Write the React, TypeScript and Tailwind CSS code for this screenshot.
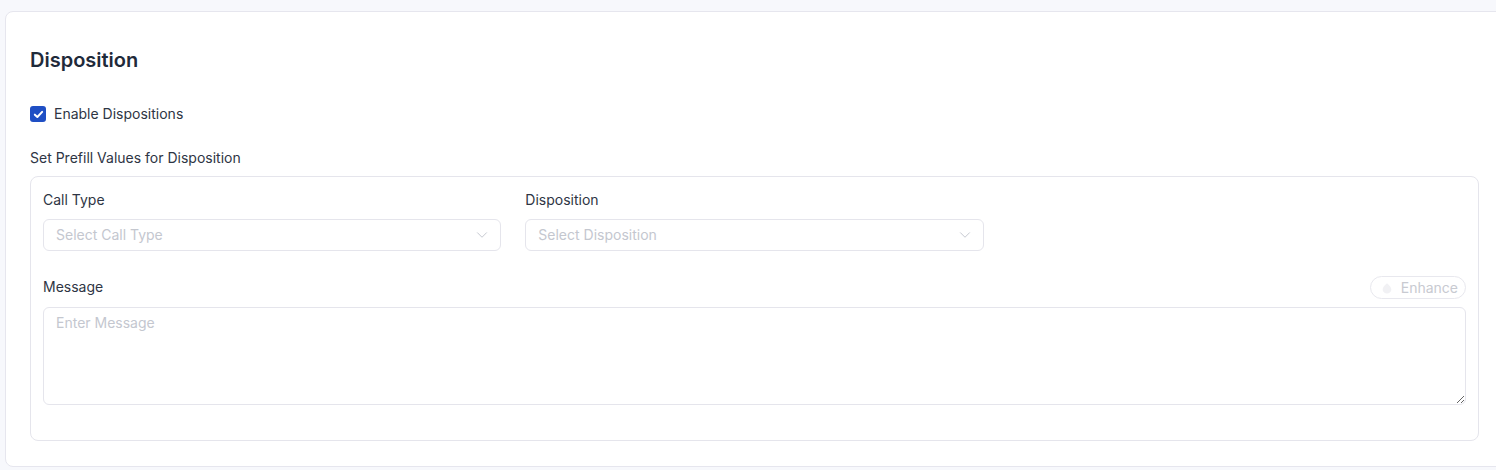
import { ChevronDown } from "lucide-react"

function SelectBox({ placeholder }: { placeholder: string }) {
   return (
      <div className="flex h-8 items-center justify-between rounded-md border border-[#e5e5ec] bg-white pl-3 pr-[9px]">
         <span className="text-sm text-[#c4c7cf]">{placeholder}</span>
         <ChevronDown className="h-[18px] w-[18px] text-[#c4c7cf]" strokeWidth={1.3} />
      </div>
   )
}

export default function App() {
   return (
      <div
         className="h-[470px] w-full overflow-hidden bg-[#f7f8fc] pl-[5px] pt-[11px]"
         style={{ fontFamily: "Inter, 'Noto Sans', sans-serif" }}
      >
         <div className="h-[456px] w-[1510px] rounded-lg border border-[#e6e6ee] bg-white pl-[24px] pr-[31px] pt-[34px]">
            <h2 className="text-xl font-semibold leading-7 text-[#1f2a3a]">Disposition</h2>

            <label className="mt-[30px] flex items-center gap-2">
               <span className="flex h-4 w-4 items-center justify-center rounded-[3px] bg-[#1f4fc4]">
                  <svg viewBox="0 0 16 16" className="h-[13px] w-[13px]" fill="none">
                     <path d="M3.5 8.2 6.6 11 12.5 4.8" stroke="white" strokeWidth="2.5" strokeLinecap="round" strokeLinejoin="round" />
                  </svg>
               </span>
               <span className="text-sm text-[#2e3544]">Enable Dispositions</span>
            </label>

            <p className="mt-[24px] text-sm text-[#2e3544]">Set Prefill Values for Disposition</p>

            <div className="mt-[8px] h-[265px] w-[1449px] rounded-lg border border-[#e5e5ec] px-3 pt-[13px]">
               <div className="grid grid-cols-3 gap-6">
                  <div>
                     <p className="mb-[9px] text-sm leading-5 text-[#2e3544]">Call Type</p>
                     <SelectBox placeholder="Select Call Type" />
                  </div>
                  <div>
                     <p className="mb-[9px] text-sm leading-5 text-[#2e3544]">Disposition</p>
                     <SelectBox placeholder="Select Disposition" />
                  </div>
               </div>

               <div className="mt-[25px] flex items-end justify-between">
                  <p className="pb-[2px] text-sm leading-5 text-[#2e3544]">Message</p>
                  <button className="flex h-[23px] items-center gap-[7px] rounded-full border border-[#e8e8ee] bg-white pl-[9px] pr-[7px]">
                     <svg viewBox="0 0 16 16" className="h-[14px] w-[14px]">
                        <path d="M8 2.5c2.6 2.3 5 4.6 5 7.2a5 4.6 0 0 1-10 0C3 7.1 5.4 4.8 8 2.5Z" fill="#f1f1f4" />
                     </svg>
                     <span className="text-sm text-[#c8cad1]">Enhance</span>
                  </button>
               </div>
               <textarea
                  placeholder="Enter Message"
                  className="mt-2 block h-[98px] w-full resize-y rounded-md border border-[#e5e5ec] px-3 py-[5px] text-sm outline-none placeholder:text-[#c4c7cf]"
               />
            </div>
         </div>
      </div>
   )
}
